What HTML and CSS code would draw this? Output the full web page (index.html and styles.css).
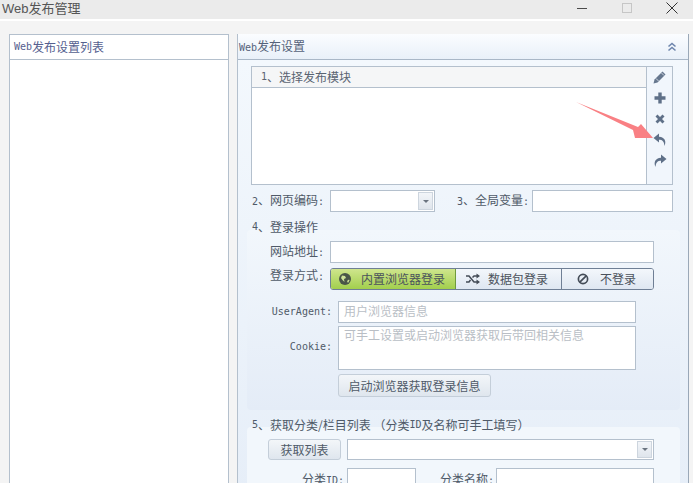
FILE: index.html
```html
<!DOCTYPE html>
<html lang="zh-CN">
<head>
<meta charset="utf-8">
<title>Web发布管理</title>
<link rel="stylesheet" href="styles.css">
</head>
<body>
<div class="window">
  <header class="titlebar">
    <span class="title">Web发布管理</span>
    <div class="winbtns">
      <svg width="12" height="12" viewBox="0 0 12 12"><path d="M1 6.500h10" stroke="#4a4a4a" stroke-width="1"/></svg>
      <svg width="12" height="12" viewBox="0 0 12 12"><rect x="1.500" y="1.500" width="9" height="9" fill="none" stroke="#c6c6c6"/></svg>
      <svg width="12" height="12" viewBox="0 0 12 12"><path d="M.5.500l11 11M11.500.500l-11 11" stroke="#333" stroke-width="1"/></svg>
    </div>
  </header>
  <main class="content">
    <aside class="left">
      <div class="left-head"><span class="lt">Web</span>发布设置列表</div>
    </aside>
    <section class="right">
      <div class="right-head">
        <span><span class="lt">Web</span>发布设置</span>
        <svg width="10" height="10" viewBox="0 0 10 10"><path d="M1.500 4.500L5 1.500l3.500 3M1.500 8.500L5 5.500l3.500 3" fill="none" stroke="#6f86ad" stroke-width="1.600"/></svg>
      </div>
      <div class="right-body">
        <div class="modules">
          <div class="mod-main">
            <div class="mod-head"><span class="lt">1</span>、选择发布模块</div>
          </div>
          <div class="mod-tools">
            <svg width="14" height="14" viewBox="0 0 14 14"><path d="M1.500 9.500L9.500 1.500l3 3-8 8-4 1z" fill="#66778e"/><path d="M8.500 3l2.500 2.500M3 8.500l2.500 2.500" stroke="#e8eef5" stroke-width=".8"/></svg>
            <svg width="14" height="14" viewBox="0 0 14 14"><path d="M5.300 1.500h3.400v3.800h3.800v3.400H8.700v3.800H5.300V8.700H1.500V5.300h3.800z" fill="#5f7088"/></svg>
            <svg width="14" height="14" viewBox="0 0 14 14"><path d="M2.500 4.500l2-2L7 5l2.500-2.500 2 2L9 7l2.500 2.500-2 2L7 9l-2.500 2.500-2-2L5 7z" fill="#5f7088"/></svg>
            <svg width="14" height="14" viewBox="0 0 14 14"><path d="M6 .5L.5 5 6 9.500V6.800c3 0 5 1 5.500 6.200 2-4.500.5-9-5.500-9.300z" fill="#5f7088"/></svg>
            <svg width="14" height="14" viewBox="0 0 14 14"><path d="M8 .5L13.500 5 8 9.500V6.800c-3 0-5 1-5.500 6.200C.5 8.500 2 4 8 3.700z" fill="#5f7088"/></svg>
          </div>
        </div>
        <div class="row-encode">
          <label class="lbl lbl-enc"><span class="lt">2</span>、网页编码<span class="lt">:</span></label>
          <div class="combo combo-enc"><span class="drop"><i></i></span></div>
          <label class="lbl lbl-var"><span class="lt">3</span>、全局变量<span class="lt">:</span></label>
          <div class="input input-var"></div>
        </div>
        <div class="sec-title sec-title-4"><span class="lt">4</span>、登录操作</div>
        <div class="panel panel-4">
          <div class="p-row">
            <label class="lbl p-lbl">网站地址<span class="lt">:</span></label>
            <div class="input grow"></div>
          </div>
          <div class="p-row p-row-login">
            <label class="lbl p-lbl">登录方式<span class="lt">:</span></label>
            <div class="seg">
              <div class="seg-item seg-on">
                <svg width="14" height="14" viewBox="0 0 14 14"><circle cx="7" cy="7" r="6" fill="#4a5648"/><path d="M4 3.500l3 .5 1 2-2 1 .5 3-2-2-1.500-2zM9 9l2-1.500.5 1-1.500 2.500z" fill="#cfe39a"/></svg>
                <span>内置浏览器登录</span>
              </div>
              <div class="seg-item seg-mid">
                <svg width="14" height="12" viewBox="0 0 14 12"><path d="M0 3h3l5 6h3M0 9h3l1.500-2M6.500 4.500L8 3h3" fill="none" stroke="#444c57" stroke-width="1.500"/><path d="M10.500 .5L14 3l-3.500 2.500zM10.500 6.500L14 9l-3.500 2.500z" fill="#444c57"/></svg>
                <span>数据包登录</span>
              </div>
              <div class="seg-item seg-last">
                <svg width="12" height="12" viewBox="0 0 12 12"><circle cx="6" cy="6" r="4.600" fill="none" stroke="#444c57" stroke-width="1.700"/><path d="M2.800 9.200l6.400-6.400" stroke="#444c57" stroke-width="1.700"/></svg>
                <span>不登录</span>
              </div>
            </div>
          </div>
          <div class="q-row q-ua">
            <label class="lbl q-lbl lt">UserAgent:</label>
            <div class="input q-field ph">用户浏览器信息</div>
          </div>
          <div class="q-row q-ck">
            <label class="lbl q-lbl q-lbl-ck lt">Cookie:</label>
            <div class="input q-field q-area ph">可手工设置或启动浏览器获取后带回相关信息</div>
          </div>
          <div class="q-btn-row"><button class="btn btn-start" type="button">启动浏览器获取登录信息</button></div>
        </div>
        <div class="sec-title sec-title-5"><span class="lt">5</span>、获取分类/栏目列表 （分类<span class="lt">ID</span>及名称可手工填写）</div>
        <div class="panel panel-5">
          <div class="r5">
            <button class="btn btn-fetch" type="button">获取列表</button>
            <div class="combo grow"><span class="drop"><i></i></span></div>
          </div>
          <div class="r5b">
            <label class="lbl lbl-id">分类<span class="lt">ID:</span></label>
            <div class="input input-id"></div>
            <label class="lbl lbl-name">分类名称<span class="lt">:</span></label>
            <div class="input grow"></div>
          </div>
        </div>
      </div>
    </section>
  </main>
  <svg class="arrow" width="82" height="40" viewBox="0 0 82 40"><path d="M0 1L62 26 65 23 77 37 59 37 57 29z" fill="#f98084"/></svg>
</div>
</body>
</html>
```
FILE: styles.css
```css
* { box-sizing: border-box; }
html, body { margin: 0; padding: 0; }
body {
  width: 693px;
  height: 483px;
  overflow: hidden;
  font: 12px/1 "Noto Sans CJK SC", "Liberation Sans", sans-serif;
  color: #4f5a68;
  background: #f4f4f4;
}
.window { position: relative; width: 693px; height: 483px; overflow: hidden; }
.lt { font-family: "DejaVu Sans Mono", "Liberation Mono", monospace; font-size: 10px; }

.titlebar {
  height: 21px;
  padding: 0 0 4px 2px;
  border-bottom: 2px solid #fff;
  background: #ebebeb;
  display: flex;
  align-items: center;
  justify-content: space-between;
}
.title { font: 13px "Liberation Sans", "Noto Sans CJK SC", sans-serif; color: #555; }
.winbtns { display: flex; align-items: center; padding-right: 15px; gap: 33px; }

.content {
  display: flex;
  align-items: flex-start;
  gap: 8px;
  padding: 13px 0 0 9px;
  height: 462px;
}
.left {
  width: 220px;
  height: 460px;
  background: #fff;
  border: 1px solid #b4c0cd;
  border-bottom: 0;
}
.left-head {
  height: 25px;
  padding-left: 4px;
  display: flex;
  align-items: center;
  border-bottom: 1px solid #b4c0cd;
  color: #55608f;
}
.right {
  width: 452px;
  height: 460px;
  border-right: 1px solid #9aa8b8;
  border-left: 1px solid #b4c0cd;
}
.right-head {
  height: 26px;
  padding: 0 11px 0 1px;
  display: flex;
  align-items: center;
  justify-content: space-between;
  background: linear-gradient(#fbfdff, #e9f0f9);
  border-bottom: 1px solid #a9b7c7;
  color: #55627a;
}
.right-body {
  height: 434px;
  padding: 6px 0 0 13px;
  background: linear-gradient(#f3f8fd, #e6eef8);
}
.modules {
  width: 422px;
  height: 119px;
  display: flex;
  border: 1px solid #b4c0cd;
  background: #fff;
}
.mod-main { flex: 1; }
.mod-head {
  height: 21px;
  padding-left: 9px;
  display: flex;
  align-items: center;
  background: #f5f6f7;
  border-bottom: 1px solid #b4c0cd;
  color: #5a6472;
}
.mod-tools {
  width: 26px;
  border-left: 1px solid #b4c0cd;
  background: #f1f6fc;
  display: flex;
  flex-direction: column;
  align-items: center;
  gap: 7px;
  padding-top: 3px;
}

.row-encode { display: flex; align-items: center; height: 22px; margin-top: 5px; }
.lbl { white-space: nowrap; color: #4f5a68; }
.lbl-enc { width: 79px; padding: 0 0 2px 1px; }
.combo {
  position: relative;
  height: 22px;
  background: #fff;
  border: 1px solid #b4c0cd;
}
.combo-enc { width: 105px; }
.drop {
  position: absolute;
  right: 1px;
  top: 1px;
  bottom: 1px;
  width: 15px;
  background: linear-gradient(#f2f5f9, #dfe5ec);
  border: 1px solid #cdd5de;
  display: flex;
  align-items: center;
  justify-content: center;
}
.drop i {
  width: 0;
  height: 0;
  border-left: 3px solid transparent;
  border-right: 3px solid transparent;
  border-top: 3px solid #6b7480;
}
.lbl-var { margin-left: 22px; width: 75px; padding-bottom: 2px; }
.input { height: 22px; background: #fff; border: 1px solid #b4c0cd; }
.input-var { width: 141px; }
.grow { flex: 1; }

.sec-title { height: 14px; line-height: 14px; margin-left: 1px; display: flex; align-items: center; white-space: pre; position: relative; }
.sec-title-4 { margin-top: 8px; }
.panel { margin-left: -4px; width: 433px; border-radius: 4px; }
.panel-4 {
  height: 180px;
  margin-top: -4px;
  padding: 11px 26px 0 23px;
  background: linear-gradient(#f2f7fc, #e4ecf7);
}
.p-row { display: flex; align-items: center; height: 22px; }
.p-lbl { width: 60px; padding-bottom: 2px; }
.p-row-login { margin-top: 5px; align-items: stretch; }
.p-row-login .p-lbl { padding: 1px 0 0; }

.seg {
  flex: 1;
  display: flex;
  border: 1px solid #6f7f95;
  border-radius: 3px;
  overflow: hidden;
}
.seg-item {
  display: flex;
  align-items: center;
  color: #4b525c;
  background: linear-gradient(#f3f7fb, #dfe7f1);
  border-right: 1px solid #6f7f95;
}
.seg-on {
  width: 125px;
  padding-left: 7px;
  gap: 9px;
  background: linear-gradient(#cfe58d, #a2cf4d);
  border-color: #6f9a3c;
}
.seg-mid { width: 106px; padding-left: 10px; gap: 8px; }
.seg-last { flex: 1; border-right: 0; padding-left: 15px; gap: 11px; }

.q-row { display: flex; }
.q-ua { margin-top: 11px; align-items: center; }
.q-ck { margin-top: 3px; align-items: center; }
.q-lbl { width: 68px; text-align: right; padding-right: 6px; flex: none; }
.q-lbl-ck { padding-bottom: 2px; }
.q-field { width: 298px; padding: 2px 5px; color: #b9bec5; }
.q-area { height: 44px; padding-top: 1px; }
.ph { font-size: 12px; line-height: 14px; }
.q-btn-row { padding: 4px 0 0 68px; }
.btn {
  font: inherit;
  color: #4f5a68;
  background: linear-gradient(#f3f6f9, #dfe6ee);
  border: 1px solid #c4ced9;
  border-radius: 3px;
  padding: 0;
}
.btn-start { width: 153px; height: 23px; }

.sec-title-5 { margin-top: 8px; }
.panel-5 {
  height: 70px;
  margin-top: -5px;
  padding: 12px 26px 0 21px;
  background: #f2f7fc;
}
.r5 { display: flex; gap: 6px; height: 21px; }
.r5 .combo { height: 21px; }
.btn-fetch { width: 73px; height: 21px; }
.r5b { display: flex; align-items: center; margin-top: 8px; height: 22px; }
.lbl-id { width: 79px; text-align: right; padding-right: 3px; }
.input-id { width: 69px; }
.lbl-name { margin-left: 24px; width: 56px; }
.arrow { position: absolute; left: 576px; top: 101px; pointer-events: none; }
```
